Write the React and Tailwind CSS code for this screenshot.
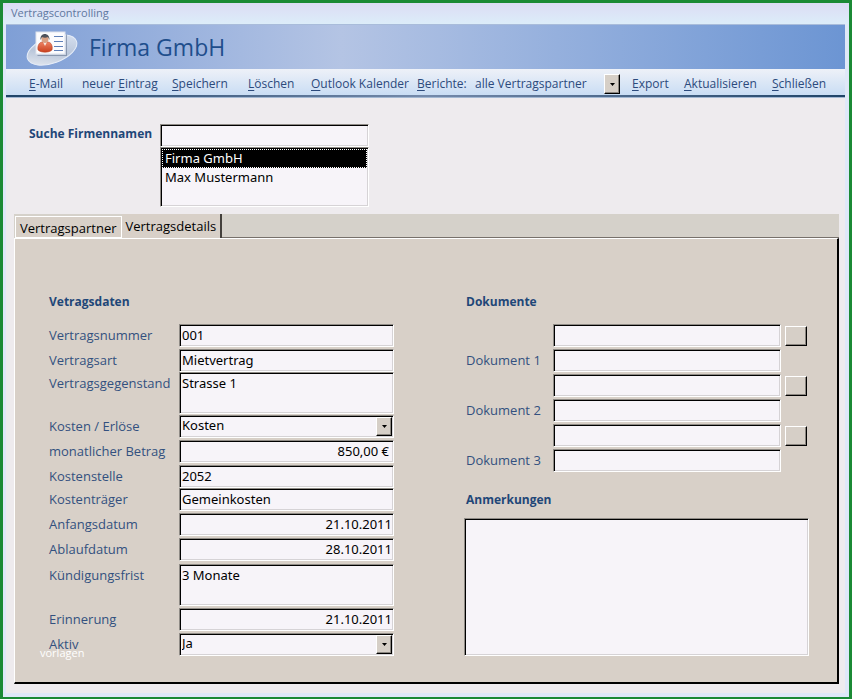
import React, { useState } from 'react';

const menu = [
    { key: 'E', before: '', after: '-Mail' },
    { key: 'E', before: 'neuer ', after: 'intrag' },
    { key: 'S', before: '', after: 'peichern' },
    { key: 'L', before: '', after: 'öschen' },
    { key: 'O', before: '', after: 'utlook Kalender' },
];

const menuRight = [
    { key: 'E', before: '', after: 'xport' },
    { key: 'A', before: '', after: 'ktualisieren' },
    { key: 'S', before: '', after: 'chließen' },
];

const firmen = ['Firma GmbH', 'Max Mustermann'];

const vertrag = [
    { id: 'nummer', label: 'Vertragsnummer', value: '001' },
    { id: 'art', label: 'Vertragsart', value: 'Mietvertrag' },
    { id: 'gegenstand', label: 'Vertragsgegenstand', value: 'Strasse 1', type: 'area' },
    { id: 'kosten', label: 'Kosten / Erlöse', value: 'Kosten', type: 'select', options: ['Kosten', 'Erlöse'] },
    { id: 'betrag', label: 'monatlicher Betrag', value: '850,00 €', type: 'money' },
    { id: 'stelle', label: 'Kostenstelle', value: '2052' },
    { id: 'traeger', label: 'Kostenträger', value: 'Gemeinkosten' },
    { id: 'anfang', label: 'Anfangsdatum', value: '21.10.2011', type: 'date' },
    { id: 'ablauf', label: 'Ablaufdatum', value: '28.10.2011', type: 'date' },
    { id: 'frist', label: 'Kündigungsfrist', value: '3 Monate', type: 'area' },
    { id: 'erinnerung', label: 'Erinnerung', value: '21.10.2011', type: 'date' },
    { id: 'aktiv', label: 'Aktiv', value: 'Ja', type: 'select', options: ['Ja', 'Nein'] },
];

// Sunken Access-style field: grey + black top/left edge, light bottom/right edge
const sunken =
    "block w-full rounded-none bg-[#f7f4f9] font-['Noto_Sans',sans-serif] text-black outline-none border border-t-[#8f8b86] border-l-[#8f8b86] border-r-white border-b-white shadow-[inset_1px_1px_0_#000,inset_-1px_-1px_0_#d6d3d6]";

const raised =
    'bg-[#d6cfc7] border border-t-white border-l-white border-r-black border-b-black shadow-[inset_-1px_-1px_0_#8a857f]';

const heading = 'text-xs leading-5 font-bold whitespace-nowrap text-[#1f4778]';

const MenuButton = ({ item }) => (
    <button type="button" className="text-left whitespace-nowrap hover:text-blue-700">
        {item.before}
        <span className="underline underline-offset-2">{item.key}</span>
        {item.after}
    </button>
);

const Arrow = () => (
    <svg viewBox="0 0 5 3" className="w-[5px] h-[3px]" aria-hidden="true">
        <path d="M0 0h5L2.5 3z" fill="#000" />
    </svg>
);

const Select = ({ id, value, options }) => (
    <div className="relative h-[23px]">
        <select id={id} defaultValue={value} className={`${sunken} h-full appearance-none pl-[2px] pb-px`}>
            {options.map((o) => (
                <option key={o}>{o}</option>
            ))}
        </select>
        <span className={`absolute right-[2px] top-[2px] bottom-[2px] w-4 flex items-center justify-center pointer-events-none ${raised}`}>
            <Arrow />
        </span>
    </div>
);

const Field = ({ field }) => {
    const { id, value, type, options } = field;
    if (type === 'select') return <Select id={id} value={value} options={options} />;
    if (type === 'area') {
        return <textarea id={id} defaultValue={value} className={`${sunken} h-[42px] resize-none pl-[2px] leading-5`} />;
    }
    return (
        <input
            id={id}
            type="text"
            defaultValue={value}
            className={`${sunken} h-[23px] pl-[2px] pb-[2px] ${type === 'date' ? 'text-right pr-px' : ''} ${type === 'money' ? 'text-right pr-1' : ''}`}
        />
    );
};

const Logo = () => (
    <svg viewBox="0 0 54 38" className="w-[54px] h-[38px] shrink-0" aria-hidden="true">
        <defs>
            <linearGradient id="disc" x1="0" y1="1" x2="1" y2="0">
                <stop offset="0" stopColor="#f0f2f6" />
                <stop offset="0.45" stopColor="#b9c6da" />
                <stop offset="1" stopColor="#dde6f5" />
            </linearGradient>
            <linearGradient id="shirt" x1="0" y1="0" x2="0" y2="1">
                <stop offset="0" stopColor="#ee8262" />
                <stop offset="1" stopColor="#c9401e" />
            </linearGradient>
        </defs>
        <ellipse cx="26" cy="22" rx="26" ry="13" transform="rotate(-20 26 22)" fill="url(#disc)" stroke="#e6edf8" />
        <path d="M11 27h29V6l1 1v21H12z" fill="#66758f" opacity="0.6" />
        <rect x="10" y="4" width="29" height="22" fill="#fcfcfe" stroke="#dde2ec" />
        <path d="M12 22c-1-5 2-8 4-8h6c3 0 5 4 4 8-3 3-11 3-14 0z" fill="url(#shirt)" stroke="#b23a1c" strokeWidth="0.5" />
        <path d="M17 14l2 4 2-4z" fill="#f7e9e2" />
        <ellipse cx="19" cy="11" rx="3.5" ry="4" fill="#d9a184" />
        <path d="M14.500 12c-1-8 9.500-8 9 0l-1.500-3c-2 1-4 1-6 0z" fill="#4d525c" />
        <path d="M28 8.500h9M28 13.500h9M28 18.500h9M28 22.500h9" stroke="#5f80b8" />
    </svg>
);

const App = () => {
    const [firma, setFirma] = useState('Firma GmbH');

    return (
        <div className="min-h-screen flex flex-col border-[3px] border-[#1b8a35] bg-[#dfe8f8] font-['Open_Sans',sans-serif] text-[13px] text-black">
            <div className="h-[21px] px-2 flex items-center text-[11px] text-[#60789f] bg-linear-to-b from-[#dcdcf4] to-[#dcedf9]">
                Vertragscontrolling
            </div>
            <div className="flex-1 flex flex-col ml-[3px] mr-1 mb-1 pb-[9px] bg-[#eeebee]">
                <header className="h-[45px] pl-5 flex items-center gap-[9px] border-t border-[#a9bcda] bg-linear-to-r from-[#7f9fd6] via-[#b4c4e4] via-40% to-[#6c95d3]">
                    <Logo />
                    <h1 className="text-[23px] leading-8 text-[#1f4e8c]">Firma GmbH</h1>
                </header>

                <nav className="h-[26px] pl-[23px] pt-1 grid grid-cols-[53fr_90fr_76fr_63fr_106fr_58fr_157fr_52fr_88fr_73fr] items-center text-xs text-[#2c4a7c] bg-linear-to-b from-[#eef1f8] to-[#c9ddf4]">
                    {menu.map((m) => (
                        <MenuButton key={m.after} item={m} />
                    ))}
                    <label htmlFor="berichte" className="whitespace-nowrap">
                        <span className="underline underline-offset-2">B</span>erichte:
                    </label>
                    <div className="relative mr-3">
                        <select id="berichte" className="block w-full h-5 appearance-none outline-none">
                            <option>alle Vertragspartner</option>
                        </select>
                        <span className={`absolute right-0 inset-y-0 w-4 flex items-center justify-center pointer-events-none ${raised}`}>
                            <Arrow />
                        </span>
                    </div>
                    {menuRight.map((m) => (
                        <MenuButton key={m.after} item={m} />
                    ))}
                </nav>
                <div className="h-[3px] border-b border-[#a3b8d2] bg-linear-to-r from-[#1f4468] via-[#748aab] to-[#1f4468]"></div>

                <section className="pl-[23px] pt-[26px] flex items-start">
                    <label htmlFor="suche" className={`w-[131px] shrink-0 ${heading}`}>
                        Suche Firmennamen
                    </label>
                    <div className="w-[209px]">
                        <input id="suche" type="text" className={`${sunken} h-[23px] px-1`} />
                        <ul role="listbox" aria-label="Firmen" className={`${sunken} h-[60px] p-px`}>
                            {firmen.map((f) => (
                                <li
                                    key={f}
                                    role="option"
                                    aria-selected={f === firma}
                                    onClick={() => setFirma(f)}
                                    className={`h-[19px] pl-[2px] border border-dotted leading-4 ${f === firma ? 'bg-black text-white border-white' : 'border-transparent'}`}
                                >
                                    {f}
                                </li>
                            ))}
                        </ul>
                    </div>
                </section>

                <main className="flex-1 flex flex-col ml-2 mr-[6px] mt-[7px]">
                    <div role="tablist" className="h-6 flex items-end bg-[#d5d1ca]">
                        <button
                            type="button"
                            role="tab"
                            aria-selected="false"
                            className="h-[22px] px-1 ml-px border border-white bg-[#d8d0c8] leading-[22px] whitespace-nowrap"
                        >
                            Vertragspartner
                        </button>
                        <button
                            type="button"
                            role="tab"
                            aria-selected="true"
                            className="h-6 px-1 border-r-2 border-[#44403c] bg-[#d8d0c8] leading-6 whitespace-nowrap"
                        >
                            Vertragsdetails
                        </button>
                        <div className="flex-1 self-stretch border-b border-[#77716b]"></div>
                    </div>

                    <div role="tabpanel" className="flex-1 pl-[34px] pr-7 pt-[53px] pb-[26px] grid grid-cols-2 gap-x-[70px] border-t border-l border-white border-r-2 border-b-2 border-r-black border-b-black bg-[#d8d0c8] text-[#33507f]">
                        <section>
                            <h2 className={`h-8 ${heading}`}>Vetragsdaten</h2>
                            <div className="grid grid-cols-[130px_1fr] grid-rows-[25px_23px_43px_25px_25px_23px_25px_25px_26px_44px_25px_23px]">
                                {vertrag.map((f) => (
                                    <React.Fragment key={f.id}>
                                        <label htmlFor={f.id} className="leading-[22px] whitespace-nowrap">{f.label}</label>
                                        <Field field={f} />
                                    </React.Fragment>
                                ))}
                            </div>
                        </section>

                        <section className="flex flex-col">
                            <h2 className={`h-8 pl-[2px] ${heading}`}>Dokumente</h2>
                            {[1, 2, 3].map((n) => (
                                <div key={n} className="h-[50px] pl-[2px] pr-[2px] grid grid-cols-[83px_1fr_22px] grid-rows-[25px_25px] gap-x-1">
                                    <input type="text" aria-label={`Pfad ${n}`} className={`${sunken} h-[23px] col-start-2`} />
                                    <button type="button" aria-label={`Dokument ${n} wählen`} className={`h-5 mt-[2px] ${raised}`}></button>
                                    <label htmlFor={`dok${n}`} className="leading-[22px]">Dokument {n}</label>
                                    <input id={`dok${n}`} type="text" className={`${sunken} h-[23px]`} />
                                </div>
                            ))}
                            <label htmlFor="anmerkungen" className={`mt-4 h-7 pl-[2px] ${heading}`}>
                                Anmerkungen
                            </label>
                            <textarea id="anmerkungen" className={`${sunken} flex-1 resize-none`} />
                        </section>
                    </div>
                </main>
            </div>
            <span className="absolute left-10 top-[645px] text-[11px] text-white">vorlagen</span>
        </div>
    );
};

export default App;
